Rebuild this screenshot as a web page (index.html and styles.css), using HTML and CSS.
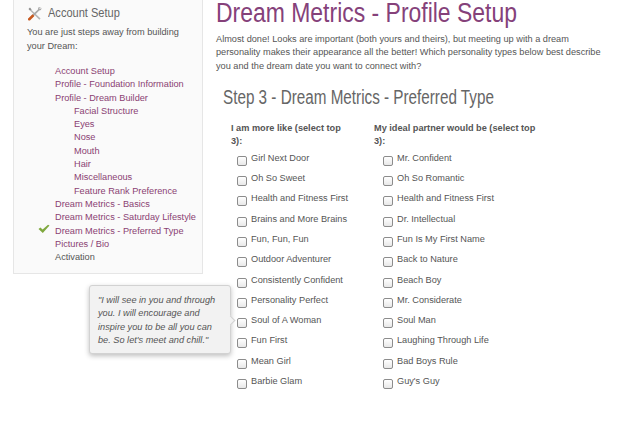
FILE: index.html
```html
<!DOCTYPE html>
<html lang="en">
<head>
    <meta charset="UTF-8">
    <meta name="viewport" content="width=device-width, initial-scale=1.0">
    <title>Dream Metrics - Profile Setup</title>
    <link rel="stylesheet" href="styles.css">
</head>
<body>
    <div class="page">
        <div class="side">
            <div class="side-box">
                <h3 class="side-title">
                    <svg class="tools" width="15" height="15" viewBox="0 0 15 15">
                        <path d="M3 1.5 L1.5 3 L3.2 4.8 L4.6 3.6 Z" fill="#8a8a8a"/>
                        <path d="M4 3.6 L13.5 12.6 L12.4 13.8 L3 4.6 Z" fill="#b5b5b5"/>
                        <path d="M14 1 L11.2 1.6 L11 3.4 L3.4 10.5 L5 12 L12.2 4.4 L14 4 L14.6 1.8 L13 3 L12.2 2.4 Z" fill="#a9a9a9"/>
                        <path d="M5.6 8.2 L7.4 10 L3.2 14.2 C2.4 14.8 1 14.4 1 13.4 C0.8 12.8 1 12.6 1.4 12.2 Z" fill="#c8591f"/>
                    </svg>
                    <span class="narrow side-label">Account Setup</span>
                </h3>
                <p class="side-intro">You are just steps away from building your Dream:</p>
                <ul class="steps">
                    <li><a href="#">Account Setup</a></li>
                    <li><a href="#">Profile - Foundation Information</a></li>
                    <li><a href="#">Profile - Dream Builder</a></li>
                    <li class="sub"><a href="#">Facial Structure</a></li>
                    <li class="sub"><a href="#">Eyes</a></li>
                    <li class="sub"><a href="#">Nose</a></li>
                    <li class="sub"><a href="#">Mouth</a></li>
                    <li class="sub"><a href="#">Hair</a></li>
                    <li class="sub"><a href="#">Miscellaneous</a></li>
                    <li class="sub"><a href="#">Feature Rank Preference</a></li>
                    <li><a href="#">Dream Metrics - Basics</a></li>
                    <li><a href="#">Dream Metrics - Saturday Lifestyle</a></li>
                    <li class="current">
                        <svg class="check" width="12" height="10" viewBox="0 0 12 10">
                            <path d="M0.5 5 L2.4 3.4 L4.6 5.4 L10 0.8 L11.5 1.6 L4.8 9 Z" fill="#7fa83e"/>
                        </svg>
                        <a href="#">Dream Metrics - Preferred Type</a>
                    </li>
                    <li><a href="#">Pictures / Bio</a></li>
                    <li class="todo">Activation</li>
                </ul>
            </div>
        </div>

        <div class="main">
            <h1><span class="narrow title-text">Dream Metrics - Profile Setup</span></h1>
            <p class="intro">Almost done! Looks are important (both yours and theirs), but meeting up with a dream personality makes their appearance all the better! Which personality types below best describe you and the dream date you want to connect with?</p>
            <h2><span class="narrow step-text">Step 3 - Dream Metrics - Preferred Type</span></h2>
            <div class="columns">
                <div class="col">
                    <h4>I am more like (select top 3):</h4>
                    <label class="opt"><input type="checkbox"><span>Girl Next Door</span></label>
                    <label class="opt"><input type="checkbox"><span>Oh So Sweet</span></label>
                    <label class="opt"><input type="checkbox"><span>Health and Fitness First</span></label>
                    <label class="opt"><input type="checkbox"><span>Brains and More Brains</span></label>
                    <label class="opt"><input type="checkbox"><span>Fun, Fun, Fun</span></label>
                    <label class="opt"><input type="checkbox"><span>Outdoor Adventurer</span></label>
                    <label class="opt"><input type="checkbox"><span>Consistently Confident</span></label>
                    <label class="opt"><input type="checkbox"><span>Personality Perfect</span></label>
                    <label class="opt"><input type="checkbox"><span>Soul of A Woman</span></label>
                    <label class="opt"><input type="checkbox"><span>Fun First</span></label>
                    <label class="opt"><input type="checkbox"><span>Mean Girl</span></label>
                    <label class="opt"><input type="checkbox"><span>Barbie Glam</span></label>
                </div>
                <div class="col">
                    <h4>My ideal partner would be (select top 3):</h4>
                    <label class="opt"><input type="checkbox"><span>Mr. Confident</span></label>
                    <label class="opt"><input type="checkbox"><span>Oh So Romantic</span></label>
                    <label class="opt"><input type="checkbox"><span>Health and Fitness First</span></label>
                    <label class="opt"><input type="checkbox"><span>Dr. Intellectual</span></label>
                    <label class="opt"><input type="checkbox"><span>Fun Is My First Name</span></label>
                    <label class="opt"><input type="checkbox"><span>Back to Nature</span></label>
                    <label class="opt"><input type="checkbox"><span>Beach Boy</span></label>
                    <label class="opt"><input type="checkbox"><span>Mr. Considerate</span></label>
                    <label class="opt"><input type="checkbox"><span>Soul Man</span></label>
                    <label class="opt"><input type="checkbox"><span>Laughing Through Life</span></label>
                    <label class="opt"><input type="checkbox"><span>Bad Boys Rule</span></label>
                    <label class="opt"><input type="checkbox"><span>Guy's Guy</span></label>
                </div>
            </div>
        </div>
    </div>

    <div class="quote">"I will see in you and through you. I will encourage and inspire you to be all you can be. So let's meet and chill."</div>
</body>
</html>
```

FILE: styles.css
```css
html, body {
    margin: 0;
    padding: 0;
    background: #fff;
    overflow: hidden;
}

body {
    font-family: "Liberation Sans", Arial, sans-serif;
    font-size: 9.2px;
    line-height: 13.3px;
    color: #555;
}

a {
    color: #8a3f73;
    text-decoration: none;
}

.page {
    display: flex;
    align-items: flex-start;
}

/* no condensed face installed, so the headings are squeezed */
.narrow {
    display: inline-block;
    transform-origin: left center;
    white-space: nowrap;
}

.side {
    width: 190px;
    margin-left: 13px;
    flex: none;
}

.side-box {
    height: 274px;
    box-sizing: border-box;
    padding: 5px 10px 0 13px;
    background: #fafafa;
    border: 1px solid #e6e6e6;
    border-top: 0;
}

.side-title {
    display: flex;
    align-items: center;
    gap: 6px;
    margin: 0;
    height: 16px;
    font-size: 13px;
    font-weight: normal;
    color: #666;
}

.side-label {
    transform: scaleX(0.85);
}

.side-intro {
    margin: 4px 0 0;
    line-height: 14px;
}

.steps {
    list-style: none;
    margin: 12px 0 0;
    padding: 0 0 0 28px;
}

.steps li {
    position: relative;
    height: 13.3px;
    white-space: nowrap;
}

.steps .sub {
    padding-left: 19px;
}

.steps .todo {
    color: #555;
}

.check {
    position: absolute;
    left: -17px;
    top: -1px;
}

.main {
    width: 385px;
    margin-left: 13px;
    flex: none;
}

h1 {
    margin: 0;
    font-size: 27px;
    line-height: 26px;
    font-weight: normal;
    color: #85417a;
}

.title-text {
    transform: scaleX(0.85);
}

.intro {
    width: 385px;
    margin: 7px 0 0;
}

h2 {
    margin: 12px 0 0 7px;
    font-size: 19.5px;
    line-height: 24px;
    font-weight: normal;
    color: #666;
}

.step-text {
    transform: scaleX(0.782);
}

.columns {
    display: flex;
    margin: 13.3px 0 0 15px;
}

.col {
    width: 143px;
    flex: none;
}

.col h4 {
    width: 120px;
    margin: 0 0 3px;
    font-size: 9.2px;
    line-height: 13.3px;
    color: #555;
}

.col:last-child {
    width: 170px;
}

.col:last-child h4 {
    width: 165px;
}

.col:last-child .opt {
    padding-left: 9px;
}

.opt {
    display: flex;
    align-items: flex-start;
    height: 20.3px;
    padding-left: 6px;
    white-space: nowrap;
}

.opt span {
    margin-left: 4px;
}

.opt input {
    appearance: none;
    width: 8px;
    height: 8px;
    margin: 4px 0 0;
    flex: none;
    background: linear-gradient(#fff, #e8e8e8);
    border: 1px solid #8c8c8c;
    border-radius: 2px;
    box-sizing: content-box;
}

.quote {
    position: absolute;
    left: 89px;
    top: 285px;
    width: 142px;
    height: 69px;
    box-sizing: border-box;
    padding: 8px;
    font-style: italic;
    color: #555;
    background: #f2f2f2;
    border: 1px solid #d2d2d2;
    border-radius: 3px;
    box-shadow: 0 2px 5px rgba(0, 0, 0, 0.25);
}

.quote::after {
    content: "";
    position: absolute;
    right: -4px;
    top: 31px;
    width: 6px;
    height: 6px;
    background: #f2f2f2;
    border-top: 1px solid #d2d2d2;
    border-right: 1px solid #d2d2d2;
    transform: rotate(45deg);
}
```
